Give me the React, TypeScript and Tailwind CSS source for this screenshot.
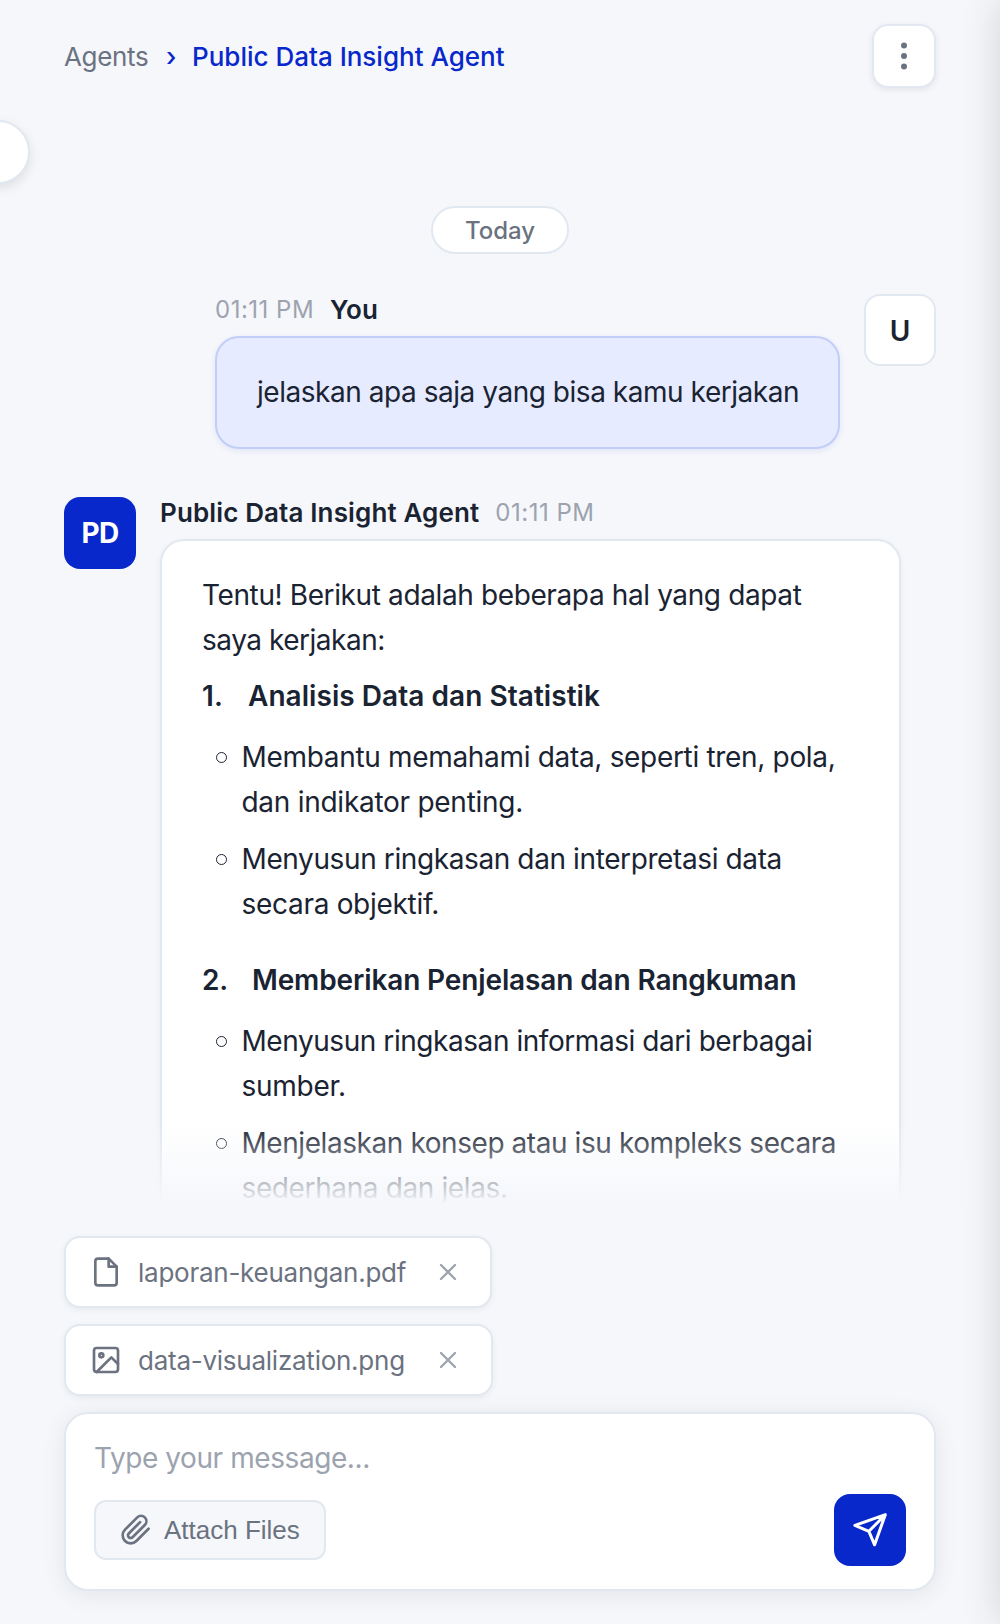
import React from "react";

const bubbleText = "text-[28px] leading-[45px] text-[#1a2332]";

function FileIcon() {
  return (
    <svg className="size-8 shrink-0" viewBox="0 0 24 24" fill="none" stroke="currentColor" strokeWidth="2" strokeLinecap="round" strokeLinejoin="round">
      <path d="M14 2H6a2 2 0 0 0-2 2v16a2 2 0 0 0 2 2h12a2 2 0 0 0 2-2V8z" />
      <path d="M14 2v6h6" />
    </svg>
  );
}

function ImageIcon() {
  return (
    <svg className="size-8 shrink-0" viewBox="0 0 24 24" fill="none" stroke="currentColor" strokeWidth="2" strokeLinecap="round" strokeLinejoin="round">
      <rect x="3" y="3" width="18" height="18" rx="2" />
      <circle cx="8.5" cy="8.5" r="1.5" />
      <path d="m21 15-5-5L5 21" />
    </svg>
  );
}

function Chip({ icon, name, width }: { icon: React.ReactNode; name: string; width: string }) {
  return (
    <div className={`flex h-[72px] items-center rounded-2xl border-2 border-[#e2e8f0] bg-white pl-6 text-[#6b7280] shadow-[0_2px_6px_rgba(0,0,0,0.06)] ${width}`}>
      {icon}
      <span className="ml-4 w-[268px] whitespace-nowrap pt-0.5 text-[26px] leading-8 tracking-[-0.25px]">{name}</span>
      <button className="ml-7 text-[#9ca3af]" aria-label="Remove">
        <svg className="size-7" viewBox="0 0 24 24" fill="none" stroke="currentColor" strokeWidth="2" strokeLinecap="round">
          <path d="M18 6 6 18M6 6l12 12" />
        </svg>
      </button>
    </div>
  );
}

function Bullet({ children }: { children: React.ReactNode }) {
  return (
    <li className="flex">
      <span className="ml-[13.5px] mr-[15px] mt-[17px] size-[11px] shrink-0 rounded-full border border-[#1a2332]" />
      <div className="whitespace-nowrap">{children}</div>
    </li>
  );
}

export default function App() {
  return (
    <div className="relative flex h-[1624px] w-[1000px] flex-col overflow-hidden bg-[#f5f7fb] font-['Inter',sans-serif]">
      <div className="absolute -left-[34px] top-[120px] size-16 rounded-full border-2 border-[#e2e8f0] bg-white shadow-[0_4px_12px_rgba(0,0,0,0.1)]" />
      <div className="absolute left-[1000px] top-0 z-10 h-[1624px] w-20 shadow-[0_0_40px_rgba(0,0,0,0.15)]" />

      <header className="flex h-[112px] shrink-0 items-center justify-between px-16">
        <nav className="flex items-center pt-0.5 text-[26px] leading-8">
          <span className="w-[102px] tracking-[-0.35px] text-[#6b7280]">Agents</span>
          <span className="w-[26px] font-medium text-[#0828cb]">›</span>
          <span className="font-medium text-[#0828cb]">Public Data Insight Agent</span>
        </nav>
        <button className="grid size-16 place-items-center rounded-2xl border-2 border-[#e2e8f0] bg-white text-[#6b7280] shadow-[0_2px_6px_rgba(0,0,0,0.08)]" aria-label="More">
          <svg className="size-9" viewBox="0 0 24 24" fill="currentColor">
            <circle cx="12" cy="5" r="2" />
            <circle cx="12" cy="12" r="2" />
            <circle cx="12" cy="19" r="2" />
          </svg>
        </button>
      </header>

      <main className="relative h-[1092px] shrink-0 overflow-hidden px-16">
        <div className="flex justify-center pt-[94px]">
          <div className="grid h-12 w-[138px] place-items-center rounded-full border-2 border-[#e2e8f0] bg-white pt-px text-2xl font-medium text-[#6b7280]">Today</div>
        </div>

        <div className="mt-10 flex justify-end gap-6">
          <div className="w-[625px]">
            <div className="flex h-8 items-center gap-4">
              <span className="text-2xl tracking-[0.5px] text-[#9ca3af]">01:11 PM</span>
              <span className="pb-px text-[26px] font-semibold leading-8 text-[#1a2332]">You</span>
            </div>
            <div className={`mt-[10px] flex h-[113px] items-center rounded-3xl border-2 border-[#c3cef8] bg-[#e7ebff] pl-10 tracking-[-0.46px] shadow-[0_2px_6px_rgba(8,40,203,0.08)] ${bubbleText}`}>
              jelaskan apa saja yang bisa kamu kerjakan
            </div>
          </div>
          <div className="grid size-[72px] place-items-center rounded-2xl border-2 border-[#e2e8f0] bg-white pt-0.5 text-[28px] font-semibold text-[#1a2332]">U</div>
        </div>

        <div className="mt-12 flex gap-6">
          <div className="grid size-[72px] shrink-0 place-items-center rounded-2xl bg-[#0828cb] text-[28px] font-bold tracking-[-0.6px] text-white">PD</div>
          <div className="w-[741px]">
            <div className="flex h-8 items-center gap-4">
              <span className="pb-px text-[26px] font-semibold leading-8 tracking-[0.13px] text-[#1a2332]">Public Data Insight Agent</span>
              <span className="text-2xl tracking-[0.5px] text-[#9ca3af]">01:11 PM</span>
            </div>
            <div className={`mt-[10px] h-[720px] rounded-3xl border-2 border-[#e2e8f0] bg-white pl-10 pt-8 shadow-[0_2px_6px_rgba(0,0,0,0.05)] ${bubbleText}`}>
              <p>
                <span className="tracking-[-0.38px]">Tentu! Berikut adalah beberapa hal yang dapat</span>
                <br />
                <span className="tracking-[-0.48px]">saya kerjakan:</span>
              </p>
              <h3 className="mt-[11px] flex font-semibold tracking-[0.05px]"><span className="w-[46px]">1.</span>Analisis Data dan Statistik</h3>
              <ul className="mt-4 flex flex-col gap-3">
                <Bullet>
                  <p className="tracking-[-0.32px]">Membantu memahami data, seperti tren, pola,</p>
                  <p className="tracking-[-0.27px]">dan indikator penting.</p>
                </Bullet>
                <Bullet>
                  <p className="tracking-[-0.39px]">Menyusun ringkasan dan interpretasi data</p>
                  <p className="tracking-[-0.3px]">secara objektif.</p>
                </Bullet>
              </ul>
              <h3 className="mt-[31px] flex font-semibold tracking-[-0.13px]"><span className="w-[50px]">2.</span>Memberikan Penjelasan dan Rangkuman</h3>
              <ul className="mt-4 flex flex-col gap-3">
                <Bullet>
                  <p className="tracking-[-0.44px]">Menyusun ringkasan informasi dari berbagai</p>
                  <p className="tracking-[-0.25px]">sumber.</p>
                </Bullet>
                <Bullet>
                  <p className="tracking-[-0.43px]">Menjelaskan konsep atau isu kompleks secara</p>
                  <p className="tracking-[-0.38px]">sederhana dan jelas.</p>
                </Bullet>
              </ul>
            </div>
          </div>
        </div>
        <div className="absolute bottom-0 left-0 h-20 w-[1000px] bg-linear-to-b from-[#f5f7fb]/0 to-[#f5f7fb]" />
      </main>

      <footer className="flex flex-col gap-4 px-16 pt-8">
        <Chip icon={<FileIcon />} name="laporan-keuangan.pdf" width="w-[428px]" />
        <Chip icon={<ImageIcon />} name="data-visualization.png" width="w-[429px]" />
        <div className="h-[179px] rounded-3xl border-2 border-[#e2e8f0] bg-white px-7 pt-[22px] shadow-[0_4px_24px_rgba(0,0,0,0.08)]">
          <div className="h-[45px] text-[28px] leading-[45px] tracking-[-0.42px] text-[#9ca3af]">Type your message...</div>
          <div className="mt-[13px] flex items-center justify-between">
            <button className="flex h-[60px] w-[232px] items-center gap-3 rounded-xl border-2 border-[#e2e8f0] bg-[#f5f7fb] pl-6 font-['Liberation_Sans',sans-serif] text-[26px] text-[#6b7280]">
              <svg className="size-8" viewBox="0 0 24 24" fill="none" stroke="currentColor" strokeWidth="2" strokeLinecap="round" strokeLinejoin="round">
                <path d="m21.44 11.05-9.19 9.19a6 6 0 0 1-8.49-8.49l9.19-9.19a4 4 0 0 1 5.66 5.66l-9.2 9.19a2 2 0 0 1-2.83-2.83l8.49-8.48" />
              </svg>
              Attach Files
            </button>
            <button className="grid size-[72px] place-items-center rounded-2xl bg-[#0828cb] text-white" aria-label="Send">
              <svg className="size-10" viewBox="0 0 40 40" fill="none" stroke="currentColor" strokeWidth="3" strokeLinecap="round" strokeLinejoin="round">
                <path d="M35.3 4.7 4.9 15.4 18.9 21.3 24.6 34.8ZM35.3 4.7 18.9 21.3" />
              </svg>
            </button>
          </div>
        </div>
      </footer>
    </div>
  );
}
